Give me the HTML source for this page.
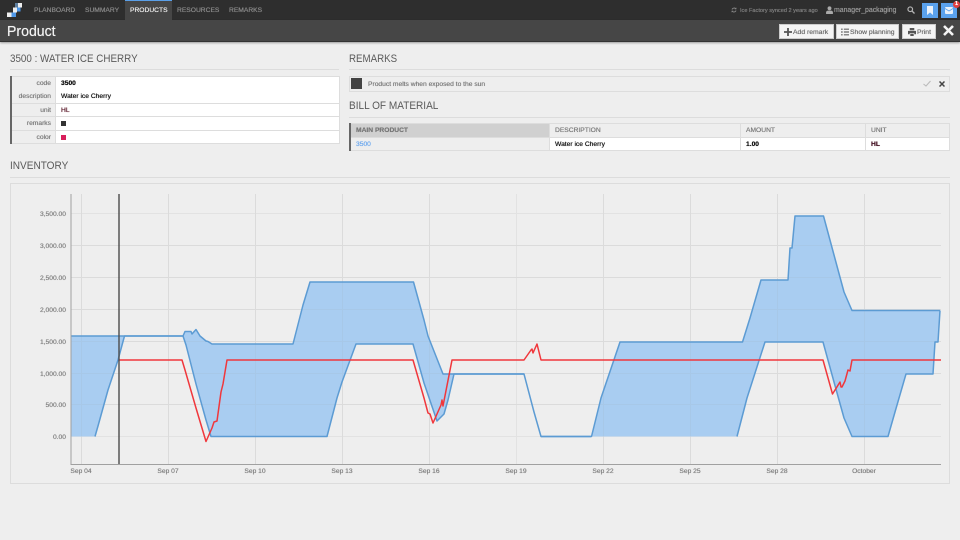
<!DOCTYPE html>
<html><head><meta charset="utf-8"><title>Product</title>
<style>
html,body{margin:0;padding:0;background:#eee;width:960px;height:540px;overflow:hidden}
body{font-family:"Liberation Sans",sans-serif;position:relative;filter:blur(.3px);text-shadow:0 0 .5px currentColor}
div,span{position:absolute;white-space:nowrap;box-sizing:border-box}
.nav{top:0;height:20px;line-height:22px;font-size:6.7px;color:#8a8a8a}
.h{font-size:11.3px;color:#5a5a5a;line-height:14px;transform-origin:0 50%;transform:scaleX(.87);text-shadow:none}
.hr{height:1px;background:#dcdcdc}
.lb{left:12px;width:43px;height:12.500px;background:#eee;color:#7a7a7a;font-size:6.700px;line-height:14px;text-align:right;padding-right:4px}
.vl{left:56px;width:283px;height:12.500px;background:#fff;color:#111;font-size:6.700px;line-height:14px;padding-left:5px}
.btn{top:24px;height:15px;background:#f4f4f4;border:1px solid #ccc;color:#666;font-size:6.800px;line-height:15px;text-align:center}
.th{top:124px;height:13px;font-size:6.700px;line-height:14px;color:#7a7a7a;background:#eee;padding-left:5px}
.td{top:138px;height:12px;font-size:6.700px;line-height:13px;color:#111;background:#fff;padding-left:5px}
.yl{width:55px;left:11px;text-align:right;font-size:6.700px;color:#808080;line-height:8px}
.xl{top:467px;font-size:6.700px;color:#808080;width:40px;text-align:center;line-height:9px}
</style></head><body>
<div style="left:0;top:0;width:960px;height:20px;background:#2e2e2e"></div>
<div style="left:0;top:20px;width:960px;height:22px;background:#464646;border-bottom:1px solid #333;box-shadow:0 1px 2px rgba(0,0,0,.35)"></div>
<svg style="position:absolute;left:0;top:0" width="30" height="20">
<rect x="7" y="12.500" width="4.500" height="4.500" fill="#eee"/><rect x="11.500" y="12.500" width="4.500" height="4.500" fill="#4f98e8"/>
<rect x="13" y="7.500" width="4" height="5" fill="#eee"/><rect x="17" y="7.500" width="3.500" height="4" fill="#4f98e8"/>
<rect x="18" y="3" width="4" height="4.500" fill="#eee"/><rect x="15" y="3" width="3" height="4.500" fill="#5f7f9f"/>
</svg>
<div class="nav" style="left:34px">PLANBOARD</div>
<div class="nav" style="left:85px">SUMMARY</div>
<div style="left:125px;top:0;width:47px;height:20px;background:#464646;border-top:1px solid #5a9fe8"></div>
<div class="nav" style="left:130px;color:#eee">PRODUCTS</div>
<div class="nav" style="left:177px">RESOURCES</div>
<div class="nav" style="left:229px">REMARKS</div>

<svg style="position:absolute;left:731px;top:7px" width="6" height="6" viewBox="0 0 12 12"><path d="M10 4A4.500 4.500 0 0 0 2 5M2 8A4.500 4.500 0 0 0 10 7" fill="none" stroke="#888" stroke-width="1.800"/><path d="M10.800 1v3.600H7.200zM1.200 11V7.400h3.600z" fill="#888"/></svg>
<div class="nav" style="left:740px;font-size:5.600px;color:#808080">Ice Factory synced 2 years ago</div>
<svg style="position:absolute;left:826px;top:6px" width="7" height="8" viewBox="0 0 12 14"><circle cx="6" cy="4" r="3.400" fill="#aaa"/><path d="M0 14V11Q0 8.500 3 8H9Q12 8.500 12 11V14Z" fill="#aaa"/></svg>
<div class="nav" style="left:834px;font-size:6.900px;color:#9a9a9a">manager_packaging</div>
<svg style="position:absolute;left:907px;top:6px" width="8" height="8" viewBox="0 0 16 16"><circle cx="6.500" cy="6.500" r="4.600" fill="none" stroke="#b5b5b5" stroke-width="2.400"/><path d="M10 10L15 15" stroke="#b5b5b5" stroke-width="2.600"/></svg>
<div style="left:922px;top:3px;width:16px;height:15px;background:#5aa2ee"></div>
<svg style="position:absolute;left:926px;top:6px" width="8" height="9" viewBox="0 0 8 9"><path d="M1 0H7V9L4 6.500 1 9Z" fill="#eaf2fb"/></svg>
<div style="left:941px;top:3px;width:16px;height:15px;background:#5aa2ee"></div>
<svg style="position:absolute;left:945px;top:7px" width="8" height="7" viewBox="0 0 8 7"><rect width="8" height="7" rx="1" fill="#eaf2fb"/><path d="M0 1.500L4 4 8 1.500" fill="none" stroke="#5aa2ee" stroke-width=".8"/></svg>
<div style="left:953px;top:1px;width:7px;height:7px;border-radius:4px;background:#e04040;color:#fff;font-size:5.500px;line-height:7px;text-align:center;font-weight:bold">1</div>

<div style="left:7px;top:23px;font-size:15px;line-height:18px;color:#f2f2f2;transform-origin:0 50%;transform:scaleX(.94)">Product</div>
<div class="btn" style="left:779px;width:55px">
<svg style="position:absolute;left:4px;top:3px" width="8" height="8" viewBox="0 0 8 8"><path d="M4 0V8M0 4H8" stroke="#555" stroke-width="1.800"/></svg><span style="left:13px;top:0;color:#6c6c6c">Add remark</span></div>
<div class="btn" style="left:836px;width:63px">
<svg style="position:absolute;left:4px;top:3px" width="8" height="8" viewBox="0 0 7 7"><path d="M0 1H1.500M0 3.500H1.500M0 6H1.500M2.500 1H7M2.500 3.500H7M2.500 6H7" stroke="#666" stroke-width="1"/></svg><span style="left:13px;top:0;color:#6c6c6c">Show planning</span></div>
<div class="btn" style="left:902px;width:34px">
<svg style="position:absolute;left:5px;top:3px" width="8" height="8" viewBox="0 0 14 14"><path d="M3 0H11V4H3ZM0 5H14V11H11V9H3V11H0ZM4 10H10V14H4Z" fill="#555"/></svg><span style="left:14px;top:0;color:#6c6c6c">Print</span></div>
<svg style="position:absolute;left:943px;top:25px" width="11" height="11" viewBox="0 0 11 11"><path d="M1 1L10 10M10 1L1 10" stroke="#f4f4f4" stroke-width="2.600"/></svg>

<div class="h" style="left:10px;top:51.500px">3500 : WATER ICE CHERRY</div>
<div class="hr" style="left:10px;top:69px;width:329px"></div>
<div style="left:10px;top:76px;width:330px;height:68px;background:#ddd"></div>
<div style="left:10px;top:76px;width:2px;height:68px;background:#666"></div>
<div class="lb" style="top:77px">code</div><div class="vl" style="top:77px;font-weight:bold">3500</div>
<div class="lb" style="top:90px;">description</div><div class="vl" style="top:90px">Water ice Cherry</div>
<div class="lb" style="top:103.500px">unit</div><div class="vl" style="top:103.500px;color:#512">HL</div>
<div class="lb" style="top:117px">remarks</div><div class="vl" style="top:117px"></div>
<div class="lb" style="top:130.500px">color</div><div class="vl" style="top:130.500px"></div>
<div style="left:61px;top:120.500px;width:5px;height:5px;background:#333"></div>
<div style="left:61px;top:134.500px;width:5px;height:5px;background:#d8205c"></div>

<div class="h" style="left:349px;top:51.500px;transform:scaleX(.86)">REMARKS</div>
<div class="hr" style="left:349px;top:69px;width:601px"></div>
<div style="left:349px;top:76px;width:601px;height:16px;border:1px solid #ddd;background:#eee"></div>
<div style="left:351px;top:78px;width:11px;height:11px;background:#444"></div>
<div style="left:368px;top:79.500px;font-size:6.700px;line-height:10px;color:#7a7a7a">Product melts when exposed to the sun</div>
<svg style="position:absolute;left:923px;top:80px" width="8" height="7" viewBox="0 0 8 7"><path d="M.5 4L3 6 7.500 1" fill="none" stroke="#bbb" stroke-width="1.100"/></svg>
<svg style="position:absolute;left:939px;top:81px" width="6" height="6" viewBox="0 0 6 6"><path d="M.5 .5L5.500 5.500M5.500 .5L.5 5.500" stroke="#444" stroke-width="1.500"/></svg>

<div class="h" style="left:349px;top:99px;transform:scaleX(.89)">BILL OF MATERIAL</div>
<div class="hr" style="left:349px;top:117px;width:601px"></div>
<div style="left:349px;top:123px;width:601px;height:28px;background:#ddd"></div>
<div style="left:349px;top:123px;width:2px;height:28px;background:#666"></div>
<div class="th" style="left:351px;width:198px;background:#d0d0d0;font-weight:bold;color:#777">MAIN PRODUCT</div>
<div class="th" style="left:550px;width:190px">DESCRIPTION</div>
<div class="th" style="left:741px;width:124px">AMOUNT</div>
<div class="th" style="left:866px;width:83px">UNIT</div>
<div class="td" style="left:351px;width:198px;background:#eee;color:#6aa7ee">3500</div>
<div class="td" style="left:550px;width:190px">Water ice Cherry</div>
<div class="td" style="left:741px;width:124px;font-weight:bold">1.00</div>
<div class="td" style="left:866px;width:83px;font-weight:bold;color:#412">HL</div>

<div class="h" style="left:10px;top:159px;transform:scaleX(.89)">INVENTORY</div>
<div class="hr" style="left:10px;top:177px;width:940px"></div>
<div style="left:10px;top:183px;width:940px;height:301px;border:1px solid #dcdcdc"></div>

<svg style="position:absolute;left:0;top:0" width="960" height="540">
<g stroke="#e2e2e2" stroke-width="1" fill="none">
<path d="M71 213.500H941M71 245.500H941M71 277.500H941M71 309.500H941M71 341.500H941M71 373.500H941M71 404.500H941M71 436.500H941"/>
<path d="M81.500 194V464M168.500 194V464M255.500 194V464M342.500 194V464M429.500 194V464M516.500 194V464M603.500 194V464M690.500 194V464M777.500 194V464M864.500 194V464"/>
</g>
<path d="M71 336H183L185 331.500H191L192 334L196 329.500L200 336L206 341L208 341.500L212 344H293L303 305L310 282H413.500L424 320L428 336L443 374H524L534 412L541 436.500H591.500L601 398L620 342H742.500L750 318L761 280H788L790 248H792L795 216H823.500L834 255L844 292L852 310.500H940L938 342H935L933 374H906L895 412L888 436.500H852L844 418L834 382L823 342H765L747 398L737 436.500H541L534 412L524 374H454L448 400L444 414L437 421L424 383L413 344H356L342 382L337 398L327 436.500H211L206 420L196 384L186 345L183 336H124.500L118 360L108 390L98 426L95 436.500H71Z" fill="#a9cdf1"/>
<g stroke="#999" stroke-opacity=".1" fill="none"><path d="M71 373.500H941M71 404.500H941M71 341.500H941M71 309.500H941M71 277.500H941M71 245.500H941M81.500 194V464M168.500 194V464M255.500 194V464M342.500 194V464M429.500 194V464M603.500 194V464M690.500 194V464M777.500 194V464M864.500 194V464"/></g>
<g fill="none" stroke="#5c9bd3" stroke-width="1.500" stroke-linejoin="round">
<path d="M71 336H183L185 331.500H191L192 334L196 329.500L200 336L206 341L208 341.500L212 344H293L303 305L310 282H413.500L424 320L428 336L443 374H524L534 412L541 436.500H591.500L601 398L620 342H742.500L750 318L761 280H788L790 248H792L795 216H823.500L834 255L844 292L852 310.500H940"/>
<path d="M95 436.500L98 426L108 390L118 360L124.500 336H183L186 345L196 384L206 420L211 436.500H327L337 398L342 382L356 344H413L424 383L437 421L444 414L448 400L454 374H524M541 436.500H591M737 436.500L747 398L765 342H823L834 382L844 418L852 436.500H888L895 412L906 374H933L935 342H938L940 310.500"/>
</g>
<path d="M119 360H182L185 370L196 408L206 441.500L212 428L214 422L217 421L221 392L223 384L227 360H413L424 398L428 413L430 414L433 423L441 405L442 400L443 406L452 360H524L531 350L532 349L533 353L537 344L541 360H823L832.500 394L840 382L841 387L842 387L845 381L848 370L850 371L852 360H941" fill="none" stroke="#f0373c" stroke-width="1.500" stroke-linejoin="round"/>
<path d="M71 194V464.500H941" fill="none" stroke="#a0a0a0" stroke-width="1"/>
<path d="M119 194V464" stroke="#4c4c4c" stroke-width="1.400"/>
</svg>

<div class="yl" style="top:211px">3,500.00</div>
<div class="yl" style="top:243px">3,000.00</div>
<div class="yl" style="top:275px">2,500.00</div>
<div class="yl" style="top:307px">2,000.00</div>
<div class="yl" style="top:339px">1,500.00</div>
<div class="yl" style="top:371px">1,000.00</div>
<div class="yl" style="top:402px">500.00</div>
<div class="yl" style="top:434px">0.00</div>
<div class="xl" style="left:61px">Sep 04</div>
<div class="xl" style="left:148px">Sep 07</div>
<div class="xl" style="left:235px">Sep 10</div>
<div class="xl" style="left:322px">Sep 13</div>
<div class="xl" style="left:409px">Sep 16</div>
<div class="xl" style="left:496px">Sep 19</div>
<div class="xl" style="left:583px">Sep 22</div>
<div class="xl" style="left:670px">Sep 25</div>
<div class="xl" style="left:757px">Sep 28</div>
<div class="xl" style="left:844px">October</div>
</body></html>
